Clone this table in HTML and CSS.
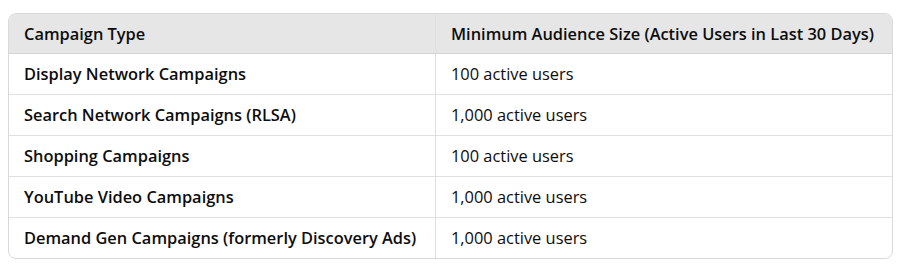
FILE: index.html
```html
<!DOCTYPE html>
<html>
<head>
<meta charset="utf-8">
<link rel="stylesheet" href="styles.css">
</head>
<body>
<div class="wrap">
<table class="tbl">
<thead>
<tr><th class="c1">Campaign Type</th><th>Minimum Audience Size (Active Users in Last 30 Days)</th></tr>
</thead>
<tbody>
<tr><td class="c1">Display Network Campaigns</td><td>100 active users</td></tr>
<tr><td class="c1">Search Network Campaigns (RLSA)</td><td>1,000 active users</td></tr>
<tr><td class="c1">Shopping Campaigns</td><td>100 active users</td></tr>
<tr><td class="c1">YouTube Video Campaigns</td><td>1,000 active users</td></tr>
<tr><td class="c1">Demand Gen Campaigns (formerly Discovery Ads)</td><td>1,000 active users</td></tr>
</tbody>
</table>
</div>
</body>
</html>
```
FILE: styles.css
```css
html, body { margin: 0; padding: 0; background: #fff; }
body { padding: 13px 7px 0 8px; font-family: "Open Sans", "Noto Sans", sans-serif; color: #0d0d0d; }
.wrap { width: 885px; border: 1px solid #d9d9d9; border-radius: 8px; overflow: hidden; box-sizing: border-box; }
.tbl { width: 100%; border-collapse: collapse; font-size: 16.4px; }
.tbl th, .tbl td { text-align: left; padding: 0 15px; height: 40px; border-bottom: 1px solid #e0e0e0; border-left: 1px solid #e0e0e0; line-height: 20px; }
.tbl th { background: #e6e6e6; font-weight: 600; height: 39px; border-bottom-color: #d4d4d4; }
.tbl tr:last-child td { border-bottom: none; }
.tbl .c1 { border-left: none; width: 396px; font-weight: 600; }
.tbl td { font-weight: 400; }
.tbl td.c1 { font-weight: 600; }
```
